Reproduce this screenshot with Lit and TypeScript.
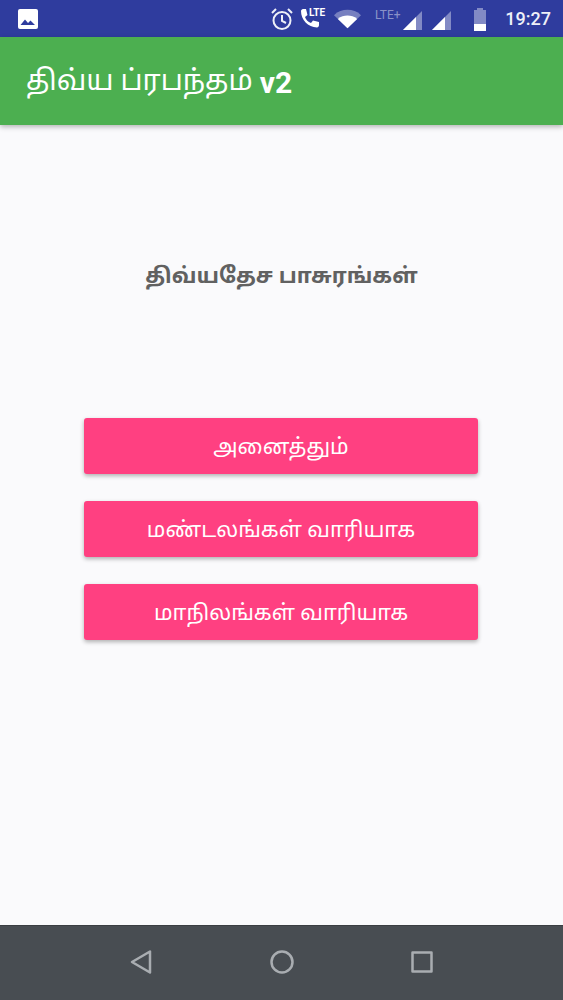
import { LitElement, html, css } from "lit";
import { customElement } from "lit/decorators.js";

@customElement("app-root")
export class AppRoot extends LitElement {
  static styles = css`
    :host { display: flex; flex-direction: column; width: 563px; height: 1000px; overflow: hidden; background: #fafafc; font-family: "Roboto", "Noto Sans", "Noto Sans Tamil", sans-serif; }
    .status { height: 37px; flex: none; background: #2f3c9e; display: flex; align-items: center; padding: 0 12px 0 17px; color: #fff; }
    .status svg { display: block; flex: none; }
    .spacer { flex: 1; }
    .time { font-size: 18px; font-weight: 500; color: #eef0f8; margin-left: 18px; }
    .bar { height: 88px; flex: none; background: #4caf50; display: flex; align-items: center; padding: 2px 26px 0; box-sizing: border-box; color: #fff; font-size: 28.300px; box-shadow: 0 2px 5px rgba(0,0,0,.28); position: relative; white-space: pre; }
    .bar b { font-weight: 700; font-size: 30px; }
    .main { flex: 1; display: flex; flex-direction: column; align-items: center; }
    h1 { margin: 132px 0 0; font-size: 21.700px; line-height: 38px; font-weight: 700; color: #616161; }
    .btns { display: flex; flex-direction: column; gap: 27px; margin: 123px 1px 0 0; }
    button { width: 394px; height: 56px; border: 0; border-radius: 3px; background: #ff4081; color: #fff; font: inherit; font-size: 21.700px; box-shadow: 0 2px 4px rgba(0,0,0,.3); padding: 3px 0 0; }
    .nav { height: 75px; flex: none; background: #484d52; border-top: 1px solid #3a3e42; box-sizing: border-box; display: flex; align-items: center; justify-content: center; gap: 117px; padding: 0 2px 3px 0; }
  `;
  render() {
    return html`
      <div class="status">
        <svg width="22" height="22" viewBox="0 0 22 22"><rect x="1" y="1" width="20" height="20" rx="2" fill="#fff"/><path d="M3.500 17 8 11.500l3 3.500 2.500-2.500 4.500 4.500Z" fill="#2f3c9e"/></svg>
        <div class="spacer"></div>
        <svg width="24" height="24" viewBox="0 0 24 24" fill="none" stroke="#eef0f8" stroke-width="2"><circle cx="12" cy="13.500" r="8.500"/><path d="M12 8v6l4 2M2 6l4-4M22 6l-4-4"/></svg>
        <svg width="30" height="26" viewBox="0 0 30 26" style="margin-left:5px"><path d="M2 5c0-1 1-2 2-2h3l1.500 6-2.500 2c1 3 3 5 6 6l2-2.500 6 1.500v3c0 1.500-1 2.500-2 2.500C9 21 2 14 2 5Z" fill="#fff"/><text x="10" y="10" font-size="10" font-weight="700" fill="#fff" font-family="Roboto">LTE</text></svg>
        <svg width="27" height="21" viewBox="0 0 28 20" style="margin-left:5px"><path d="M0 6.500C4 2.500 9 1 14 1s10 1.500 14 5.500L14 20Z" fill="#fff" opacity=".35"/><path d="M4 10.500C7 8 10.500 7 14 7s7 1 10 3.500L14 20Z" fill="#fff"/></svg>
        <svg width="30" height="14" viewBox="0 0 30 14" style="margin:-9px 0 0 14px"><text x="0" y="12" font-size="12" fill="#fff" fill-opacity=".45" font-family="Roboto">LTE+</text></svg>
        <svg width="20" height="20" viewBox="0 0 20 20" style="margin:3px 0 0 -2px"><path d="M0 20 19 1v19Z" fill="#fff" opacity=".4"/><path d="M0 20 13 7v13Z" fill="#fff"/></svg>
        <svg width="20" height="20" viewBox="0 0 20 20" style="margin:3px 0 0 9px"><path d="M0 20 19 1v19Z" fill="#fff" opacity=".4"/><path d="M0 20 13 7v13Z" fill="#fff"/></svg>
        <svg width="14" height="24" viewBox="0 0 14 24" style="margin-left:21px"><path d="M4 1h6v2h3v21H1V3h3Z" fill="#fff" opacity=".4"/><rect x="1" y="17" width="12" height="7" fill="#fff"/></svg>
        <span class="time">19:27</span>
      </div>
      <div class="bar">திவ்ய ப்ரபந்தம் <b>v2</b></div>
      <div class="main">
        <h1>திவ்யதேச பாசுரங்கள்</h1>
        <div class="btns">
          <button>அனைத்தும்</button>
          <button>மண்டலங்கள் வாரியாக</button>
          <button>மாநிலங்கள் வாரியாக</button>
        </div>
      </div>
      <div class="nav">
        <svg width="24" height="26" viewBox="0 0 24 26" fill="none" stroke="#a9adb1" stroke-width="2.500" stroke-linejoin="round"><path d="M21 2.500v21L3 13Z"/></svg>
        <svg width="24" height="24" viewBox="0 0 24 24" fill="none" stroke="#a9adb1" stroke-width="2.500"><circle cx="12" cy="12" r="10.500"/></svg>
        <svg width="22" height="22" viewBox="0 0 22 22" fill="none" stroke="#a9adb1" stroke-width="2.500" stroke-linejoin="round"><rect x="1.500" y="1.500" width="19" height="19"/></svg>
      </div>
    `;
  }
}
